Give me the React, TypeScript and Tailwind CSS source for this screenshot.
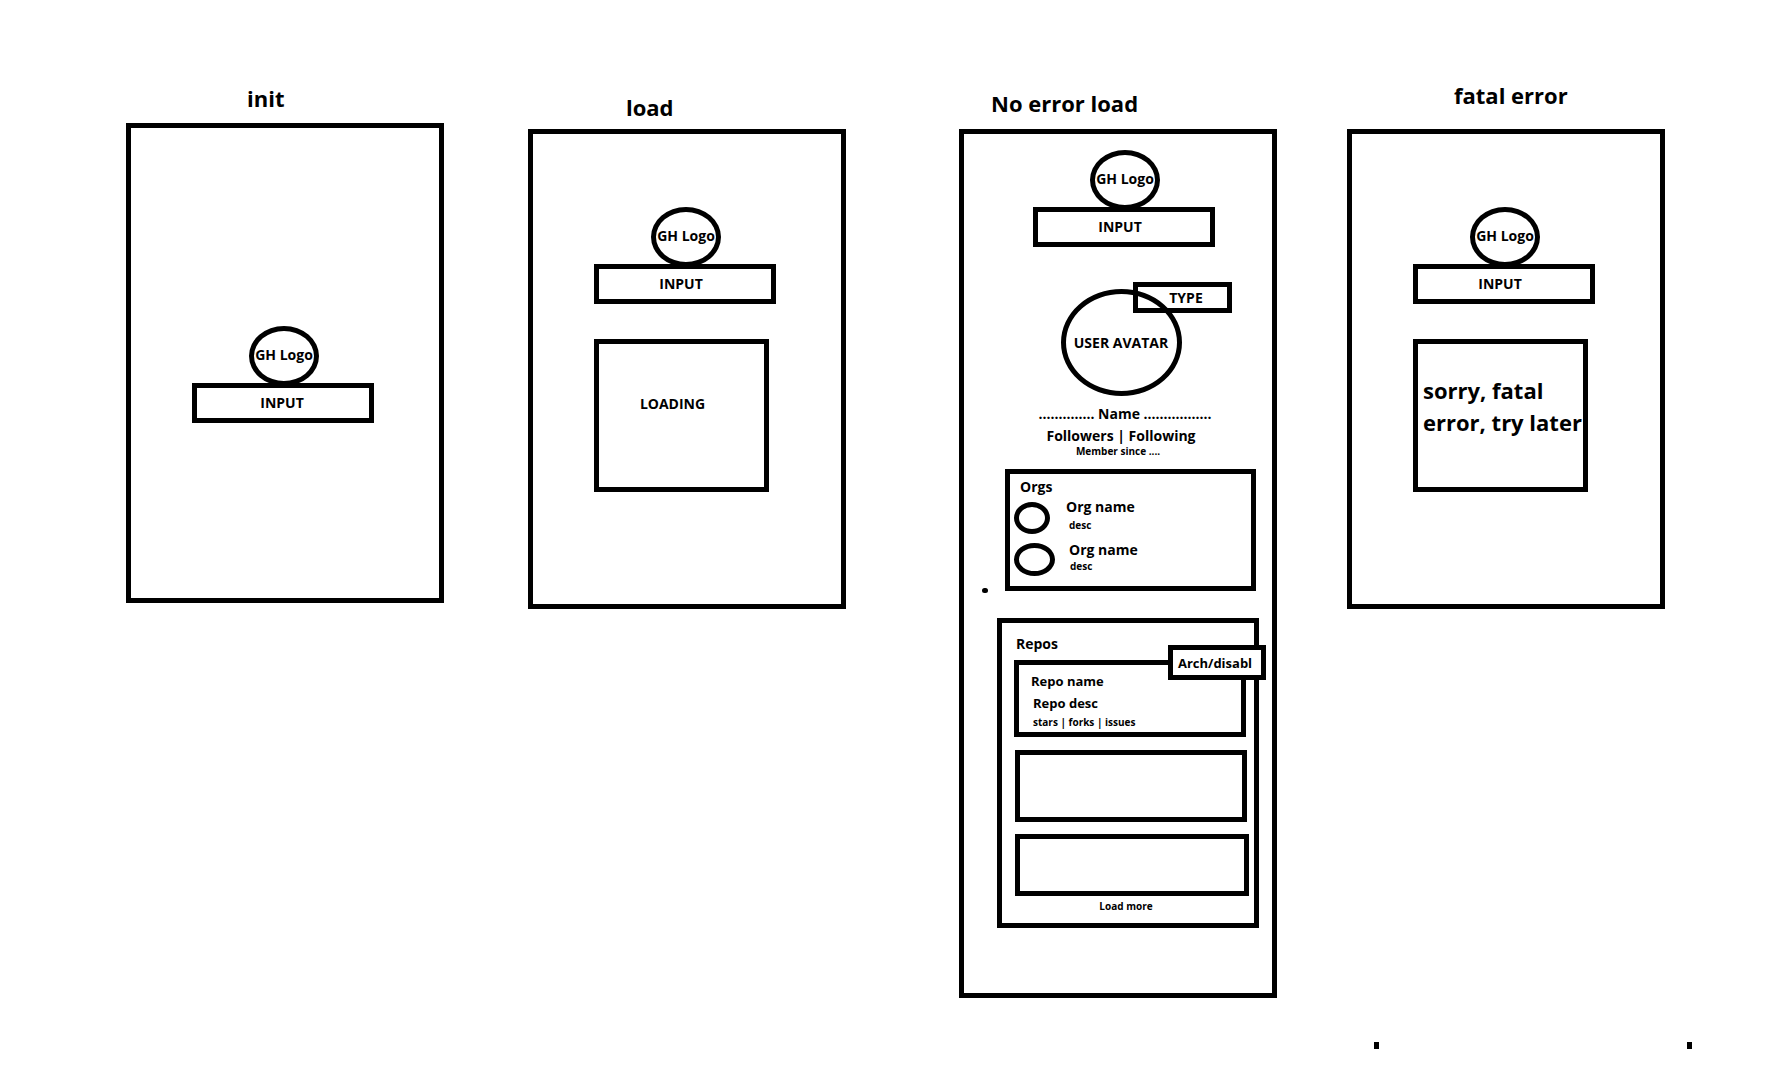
import type { ReactNode } from "react";

const LABEL = "text-[14px] leading-5 whitespace-nowrap";
const SMALL = "text-[10px] leading-[14px] font-bold whitespace-nowrap";

function Screen({
  title,
  className,
  titleClass,
  frameClass,
  children,
}: {
  title: string;
  className: string;
  titleClass: string;
  frameClass: string;
  children: ReactNode;
}) {
  return (
    <section className={`min-w-0 flex-1 ${className}`}>
      <h2 className={`text-[22px] leading-8 whitespace-nowrap ${titleClass}`}>{title}</h2>
      <div className={`border-5 border-black ${frameClass}`}>{children}</div>
    </section>
  );
}

function Search({ id, className, inputClass = "pr-2" }: { id: string; className: string; inputClass?: string }) {
  return (
    <div className={`flex flex-col items-center ${className}`}>
      <label
        htmlFor={id}
        className={`-mb-[3px] ml-0.5 flex h-[60px] w-[70px] items-center justify-center rounded-[50%] border-5 border-black pb-0.5 ${LABEL}`}
      >
        GH Logo
      </label>
      <input
        id={id}
        type="text"
        defaultValue="INPUT"
        className={`h-10 w-full border-5 border-black bg-transparent pb-0.5 text-center outline-none ${inputClass} ${LABEL}`}
      />
    </div>
  );
}

function Org({ circle, text, desc }: { circle: string; text: string; desc: string }) {
  return (
    <li className="flex items-start">
      <span className={`shrink-0 rounded-[50%] border-5 border-black ${circle}`} />
      <div className={text}>
        <h4 className={LABEL}>Org name</h4>
        <p className={`${SMALL} ${desc}`}>desc</p>
      </div>
    </li>
  );
}

export default function App() {
  return (
    <div className="min-h-screen bg-white font-['Open_Sans','Noto_Sans',sans-serif] font-bold text-black">
      <main className="flex items-start pr-[119px] pl-[126px]">
        <Screen title="init" className="pt-[82px]" titleClass="mb-[9px] pl-[121px]" frameClass="pt-[198px] pb-[175px]">
          <Search id="init-search" className="mr-[65px] ml-[61px]" inputClass="pr-0.5" />
        </Screen>

        <Screen title="load" className="ml-[84px] pt-[91px]" titleClass="mb-1.5 pl-[98px]" frameClass="pt-[73px] pb-28">
          <Search id="load-search" className="mr-[65px] ml-[61px]" />
          <div className="mt-[35px] mr-[72px] ml-[61px] flex h-[153px] items-center justify-center border-5 border-black pr-[18px] pb-6">
            <p className={LABEL}>LOADING</p>
          </div>
        </Screen>

        <Screen
          title="No error load"
          className="ml-[113px] pt-[87px]"
          titleClass="mb-2.5 pl-8"
          frameClass="flex flex-col pt-4 pb-[65px]"
        >
          <Search id="result-search" className="mr-[57px] ml-[69px]" />

          <div className="mt-[42px] flex flex-col items-center pl-1.5">
            <div className="relative flex h-[107px] w-[121px] items-center justify-center rounded-[50%] border-5 border-black">
              <span className={LABEL}>USER AVATAR</span>
              <span
                className={`absolute -top-3 left-[67px] flex h-[31px] w-[99px] items-center justify-center border-5 border-black pl-2 ${LABEL}`}
              >
                TYPE
              </span>
            </div>
            <h3 className={`mt-2 pl-2 ${LABEL}`}>.............. Name .................</h3>
            <p className={`mt-0.5 ${LABEL}`}>Followers | Following</p>
            <p className={`-mt-0.5 pr-1.5 ${SMALL}`}>Member since ....</p>
          </div>

          <section className="relative mt-[11px] mr-4 ml-[41px] border-5 border-black pt-[3px] pb-2.5 pl-1">
            <h3 className={`pl-1.5 ${LABEL}`}>Orgs</h3>
            <ul className="flex flex-col gap-1.5">
              <Org circle="mt-[5px] h-8 w-9" text="ml-4" desc="mt-px pl-[3px]" />
              <Org circle="mt-[3px] h-[33px] w-[41px]" text="ml-3.5" desc="-mt-px pl-px" />
            </ul>
            <span className="absolute -bottom-[7px] -left-7 h-[5px] w-1.5 rounded-sm bg-black" />
          </section>

          <section className="mt-[27px] mr-[13px] ml-[33px] flex flex-col border-5 border-black pt-[11px] pb-2.5 pl-3">
            <h3 className={`pl-0.5 ${LABEL}`}>Repos</h3>
            <article className="relative mt-1.5 mr-2 border-5 border-black pt-[7px] pb-[3px] pl-3">
              <h4 className="text-[13px] leading-[18px]">Repo name</h4>
              <p className="mt-1 pl-0.5 text-[13px] leading-[18px]">Repo desc</p>
              <p className={`mt-[3px] pl-0.5 ${SMALL}`}>stars | forks | issues</p>
              <span className="absolute -top-5 -right-[25px] flex h-[35px] w-[98px] items-center justify-center border-5 border-black bg-white pr-1 text-[13px] leading-[18px]">
                Arch/disabl
              </span>
            </article>
            <article className="mt-[13px] mr-[7px] ml-px h-[72px] border-5 border-black" />
            <article className="mt-3 mr-[5px] ml-px h-[62px] border-5 border-black" />
            <button type="button" className={`mt-[3px] mr-4 self-center ${SMALL}`}>
              Load more
            </button>
          </section>
        </Screen>

        <Screen
          title="fatal error"
          className="ml-[70px] pt-[79px]"
          titleClass="mb-[18px] pl-[107px]"
          frameClass="pt-[73px] pb-28"
        >
          <Search id="error-search" className="mr-[65px] ml-[61px]" />
          <div className="mt-[35px] mr-[72px] ml-[61px] h-[153px] border-5 border-black pt-[30px] pl-[5px]">
            <p className="text-[22px] leading-8 whitespace-nowrap">
              sorry, fatal
              <br />
              error, try later
            </p>
          </div>
        </Screen>
      </main>

      <div className="mt-11 mr-[92px] ml-auto flex w-[318px] justify-between">
        <span className="h-[7px] w-[5px] bg-black" />
        <span className="h-[7px] w-[5px] bg-black" />
      </div>
    </div>
  );
}
